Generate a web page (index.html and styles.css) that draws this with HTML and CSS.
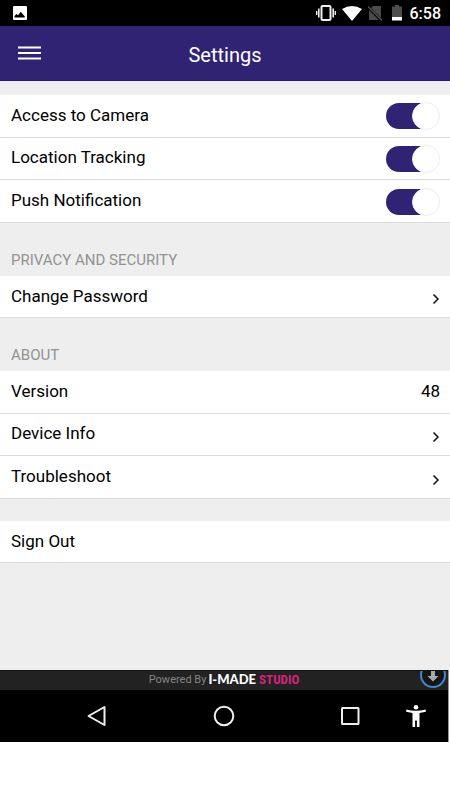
FILE: index.html
```html
<!DOCTYPE html>
<html lang="en">
<head>
<meta charset="utf-8">
<meta name="viewport" content="width=device-width, initial-scale=1">
<title>Settings</title>
<link rel="stylesheet" href="styles.css">
</head>
<body>
<div class="status">
  <svg class="status-photo" width="16" height="16" viewBox="0 0 16 16" aria-hidden="true"><rect x="1" y="1" width="14" height="14" rx="1" fill="#fff"/><path d="M2.500 12.500v-1.500l2-2 1.500 1.300 2.800-3.500 4 4.700v1z" fill="#000"/></svg>
  <div class="status-icons">
    <svg width="20" height="18" viewBox="0 0 20 18" aria-hidden="true"><rect x="5.500" y="2" width="9" height="14" rx="1" fill="none" stroke="#eee" stroke-width="2"/><path d="M2.800 4.500v9M17.200 4.500v9" stroke="#eee" stroke-width="1.600"/><path d="M.7 7v4M19.300 7v4" stroke="#eee" stroke-width="1.400"/></svg>
    <svg width="20" height="18" viewBox="0 0 20 18" aria-hidden="true"><path d="M0 5Q10-1 20 5L10 17z" fill="#fff"/></svg>
    <svg width="14" height="18" viewBox="0 0 14 18" aria-hidden="true"><path d="M5 2h8v14H1V6z" fill="#4a4a4a"/><path d="M0 3l14 14" stroke="#000" stroke-width="3"/><path d="M0 2.500l14 14" stroke="#555" stroke-width="1.300"/></svg>
    <svg width="10" height="18" viewBox="0 0 10 18" aria-hidden="true"><path d="M0 2.500h3V1h4v1.500h3V13H0z" fill="#4d4d4d"/><path d="M0 13h10v3.500H0z" fill="#fff"/></svg>
    <span class="clock">6:58</span>
  </div>
</div>
<header class="bar">
  <button class="menu" type="button" aria-label="Menu"><svg width="24" height="16" viewBox="0 0 24 16"><path d="M0 2.500h23M0 8h23M0 13.500h23" stroke="#fff" stroke-width="2"/></svg></button>
  <h1>Settings</h1>
</header>
<main>
  <div class="group triple">
    <label class="row">Access to Camera<input class="switch" type="checkbox" checked></label>
    <label class="row">Location Tracking<input class="switch" type="checkbox" checked></label>
    <label class="row">Push Notification<input class="switch" type="checkbox" checked></label>
  </div>
  <h2>PRIVACY AND SECURITY</h2>
  <div class="group">
    <a class="row" href="#password">Change Password<svg class="chevron" width="8" height="12" viewBox="0 0 8 12" aria-hidden="true"><path d="M1.500 1.500L6 6l-4.500 4.500"/></svg></a>
  </div>
  <h2>ABOUT</h2>
  <div class="group triple">
    <div class="row">Version<span>48</span></div>
    <a class="row" href="#device">Device Info<svg class="chevron" width="8" height="12" viewBox="0 0 8 12" aria-hidden="true"><path d="M1.500 1.500L6 6l-4.500 4.500"/></svg></a>
    <a class="row" href="#troubleshoot">Troubleshoot<svg class="chevron" width="8" height="12" viewBox="0 0 8 12" aria-hidden="true"><path d="M1.500 1.500L6 6l-4.500 4.500"/></svg></a>
  </div>
  <div class="group signout">
    <button class="row" type="button">Sign Out</button>
  </div>
</main>
<footer>
  <div class="powered">
    <span>Powered By</span><strong class="made">I-MADE</strong><strong class="studio">STUDIO</strong>
    <svg class="download" width="26" height="18" viewBox="0 0 26 18" aria-hidden="true"><circle cx="13" cy="4" r="12" fill="#151515" stroke="#3f87cf" stroke-width="2"/><path d="M11 0h4v5h3.500L13 10.500 7.500 5H11z" fill="#aaa"/></svg>
  </div>
  <nav>
    <button class="back" type="button" aria-label="Back"><svg width="22" height="24" viewBox="0 0 22 24"><path d="M18.500 3v18L2.500 12z" fill="none" stroke="#eee" stroke-width="2" stroke-linejoin="round"/></svg></button>
    <button class="home" type="button" aria-label="Home"><svg width="22" height="24" viewBox="0 0 22 24"><circle cx="11" cy="12" r="9.300" fill="none" stroke="#eee" stroke-width="2"/></svg></button>
    <button class="recent" type="button" aria-label="Recent apps"><svg width="22" height="24" viewBox="0 0 22 24"><rect x="3" y="4" width="16.500" height="16" rx=".5" fill="none" stroke="#eee" stroke-width="2"/></svg></button>
    <button class="access" type="button" aria-label="Accessibility"><svg width="22" height="24" viewBox="0 0 22 24"><circle cx="11" cy="3.300" r="2.300" fill="#fff"/><path d="M1.200 5.500Q11 8 20.800 5.500v2.200L14.500 9v14h-2.600v-6.500h-1.800V23H7.500V9L1.200 7.700z" fill="#fff"/></svg></button>
  </nav>
</footer>
</body>
</html>
```
FILE: styles.css
```css
*, *::before { box-sizing: border-box; }
body {
  margin: 0;
  background: #fff;
  color: #000;
  font-family: Roboto, "Liberation Sans", sans-serif;
  font-size: 17px;
}
button { border: 0; padding: 0; margin: 0; background: none; font: inherit; color: inherit; }
svg { display: block; }

.status {
  display: flex;
  justify-content: space-between;
  align-items: center;
  height: 26px;
  padding: 0 9px 0 12px;
  background: #000;
}
.status-icons { display: flex; align-items: center; }
.status-icons svg { margin-right: 6px; }
.status-icons svg:nth-child(3) { margin-right: 10px; }
.status-icons svg:nth-child(4) { margin-right: 8px; }
.clock { color: #fff; font-size: 16px; font-weight: 500; line-height: 24px; padding-top: 2px; }

.bar {
  display: grid;
  grid-template-columns: 48px 1fr 48px;
  align-items: center;
  height: 55px;
  background: #312374;
  border-bottom: 1px solid #28196b;
  color: #fff;
}
.menu { padding-left: 18px; }
h1 { margin: 0; padding-top: 3px; font-size: 20px; font-weight: 400; text-align: center; line-height: 24px; }

main { padding: 14px 0 107px; background: #eee; }
.group { display: grid; grid-auto-rows: 1fr; height: 42px; }
.triple { height: 128px; }
.signout { margin-top: 22px; }
.row {
  display: flex;
  justify-content: space-between;
  align-items: center;
  width: 100%;
  padding: 0 10px 2px 11px;
  background: #fff;
  border-bottom: 1px solid #dcdcdc;
  color: inherit;
  text-decoration: none;
  line-height: 20px;
}
h2 {
  display: flex;
  align-items: flex-end;
  height: 53px;
  margin: 0;
  padding: 0 11px 6px;
  color: #929292;
  font-size: 15px;
  font-weight: 400;
  line-height: 20px;
}
.switch {
  appearance: none;
  display: flex;
  justify-content: flex-end;
  align-items: center;
  width: 54px;
  height: 26px;
  margin: 3px 0 0;
  border-radius: 13px;
  background: linear-gradient(90deg, #312374 40px, #fff 40px);
}
.switch::before {
  content: "";
  flex: none;
  width: 28px;
  height: 28px;
  border: 1px solid #eee;
  border-radius: 50%;
  background: #fff;
}
.chevron { margin-top: 7px; fill: none; stroke: #111; stroke-width: 1.5; }

footer { margin-right: 1px; border-right: 1px solid #999; background: #000; }
.powered {
  position: relative;
  display: flex;
  justify-content: center;
  align-items: center;
  height: 20px;
  padding-bottom: 2px;
  background: #222;
  border-top: 1px solid #111;
  color: #858585;
  font-size: 11px;
  line-height: 17px;
}
.made { margin: 0 3px 0 2px; color: #fff; font-family: Lato, sans-serif; font-size: 13px; font-weight: 900; }
.studio { color: #d8237d; font-family: "Roboto Condensed", "Open Sans Condensed", Roboto, sans-serif; font-size: 13px; }
.download { position: absolute; top: 0; right: 2px; }
nav {
  display: grid;
  grid-template-columns: 64px 66px 1fr 66px 1fr 66px 65px;
  height: 52px;
}
nav button { display: flex; justify-content: center; align-items: center; }
.back { grid-column: 2; }
.home { grid-column: 4; }
.recent { grid-column: 6; }
.access { grid-column: 7; }
```
